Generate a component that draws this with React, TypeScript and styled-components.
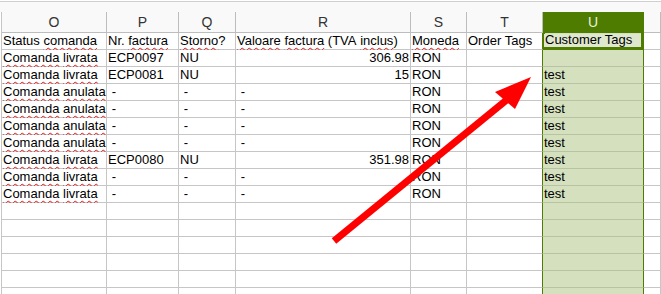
import styled, { createGlobalStyle } from 'styled-components'

const GlobalStyle = createGlobalStyle`
    html, body {
        margin: 0;
        padding: 0;
        background: #ffffff;
        overflow: hidden;
    }
    * { box-sizing: border-box; }
`

const GREEN = '#4e7c00'
const GRID = '#c6c6c6'

// column widths for O..U, V takes what is left
const widths = [105, 72, 57, 175, 56, 76, 101]
const letters = ['O', 'P', 'Q', 'R', 'S', 'T', 'U', '']
const SELECTED = 6

const misspelt = new Set(['comanda', 'Comanda', 'livrata', 'anulata', 'factura', 'Storno', 'Valoare', 'inclus', 'Moneda'])

const livrata = (nr: string, storno: string, value: string, tag: string) =>
    ['Comanda livrata', nr, storno, value, 'RON', '', tag]
const anulata = ['Comanda anulata', ' -', ' -', ' -', 'RON', '', 'test']

const rows: string[][] = [
    ['Status comanda', 'Nr. factura', 'Storno?', 'Valoare factura (TVA inclus)', 'Moneda', 'Order Tags', 'Customer Tags'],
    livrata('ECP0097', 'NU', '306.98', ''),
    livrata('ECP0081', 'NU', '15', 'test'),
    anulata,
    anulata,
    anulata,
    anulata,
    livrata('ECP0080', 'NU', '351.98', 'test'),
    livrata(' -', ' -', ' -', 'test'),
    livrata(' -', ' -', ' -', 'test'),
]
const emptyRows = 6

const isNumber = (s: string) => /^\d+(\.\d+)?$/.test(s)

// wrap the words the spell checker flags
const spell = (text: string) =>
    text.split(/(\s+)/).map((part, i) => {
        const m = part.match(/^(\(?)([A-Za-z]+)(.*)$/)
        if (m && misspelt.has(m[2])) {
            return <span key={i}>{m[1]}<Misspelt>{m[2]}</Misspelt>{m[3]}</span>
        }
        return <span key={i}>{part}</span>
    })

const Page = styled.div`
    position: relative;
    width: 661px;
    height: 294px;
    font-family: "Liberation Sans", Arial, sans-serif;
    overflow: hidden;
`

const TopStrip = styled.div`
    height: 11px;
    margin-top: 1px;
    border-top: 1px solid #cfcfcf;
    background: #f9f9f9;
`

const Sheet = styled.div`
    display: grid;
    grid-template-columns: ${widths.map(w => `${w}px`).join(' ')} 1fr;
    grid-template-rows: 21px;
    grid-auto-rows: 17px;
    margin-left: 1px;
    border-left: 1px solid ${GRID};
`

const ColHead = styled.div<{ $selected?: boolean }>`
    display: flex;
    align-items: center;
    justify-content: center;
    padding-bottom: 1px;
    font-size: 14px;
    color: ${p => (p.$selected ? '#eaf2dc' : '#333333')};
    background: ${p => (p.$selected ? GREEN : '#f9f9f9')};
    border-right: 1px solid ${p => (p.$selected ? GREEN : '#bdbdbd')};
    border-bottom: 1px solid ${p => (p.$selected ? GREEN : '#bdbdbd')};
`

const Cell = styled.div<{ $selected?: boolean; $beforeSelected?: boolean; $align?: 'left' | 'right' }>`
    display: flex;
    align-items: flex-end;
    justify-content: ${p => (p.$align === 'right' ? 'flex-end' : 'flex-start')};
    padding: 0 1px 0 1px;
    font-size: 13px;
    line-height: 16px;
    color: #000000;
    white-space: pre;
    overflow: visible;
    background: ${p => (p.$selected ? '#d4e0be' : '#ffffff')};
    border-right: 1px solid ${p => (p.$selected || p.$beforeSelected ? GREEN : GRID)};
    border-bottom: 1px solid ${p => (p.$selected ? '#b7c3a3' : GRID)};
`

const CursorCell = styled(Cell)`
    padding: 1px 2px 2px 1px;
    align-items: stretch;
    box-shadow: inset 2px 0 0 ${GREEN}, inset 0 -2px 0 ${GREEN}, inset -2px 0 0 ${GREEN};
    border-bottom-color: ${GREEN};
`

const CursorText = styled.span`
    flex: 1;
    display: flex;
    align-items: flex-end;
    padding-left: 1px;
    line-height: 14px;
    background: #dfe8cf;
`

const Misspelt = styled.span`
    text-decoration: underline wavy #e21a1a;
    text-decoration-thickness: 1.4px;
    text-underline-offset: 2px;
    text-decoration-skip-ink: none;
`

const Arrow = styled.svg`
    position: absolute;
    left: 0;
    top: 0;
    pointer-events: none;
`

export default function App() {
    return (
        <Page>
            <GlobalStyle />
            <TopStrip />
            <Sheet>
                {letters.map((l, i) => (
                    <ColHead key={l || 'v'} $selected={i === SELECTED}>
                        {l}
                    </ColHead>
                ))}
                {rows.map((row, r) => (
                    <Row key={r} row={row} first={r === 0} />
                ))}
                {Array.from({ length: emptyRows }).map((_, r) => (
                    <Row key={`e${r}`} row={['', '', '', '', '', '', '']} first={false} />
                ))}
            </Sheet>
            <Arrow width="661" height="294" viewBox="0 0 661 294">
                <line x1="334" y1="241" x2="509" y2="98" stroke="#ff0000" strokeWidth="7" />
                <polygon points="531,77 495,92 515,109" fill="#ff0000" />
            </Arrow>
        </Page>
    )
}

function Row({ row, first }: { row: string[]; first: boolean }) {
    return (
        <>
            {row.map((text, c) => {
                if (first && c === SELECTED) {
                    return (
                        <CursorCell key={c} $selected>
                            <CursorText>{text}</CursorText>
                        </CursorCell>
                    )
                }
                return (
                    <Cell
                        key={c}
                        $selected={c === SELECTED}
                        $beforeSelected={c === SELECTED - 1}
                        $align={isNumber(text) ? 'right' : 'left'}
                    >
                        {spell(text)}
                    </Cell>
                )
            })}
            <Cell />
        </>
    )
}
